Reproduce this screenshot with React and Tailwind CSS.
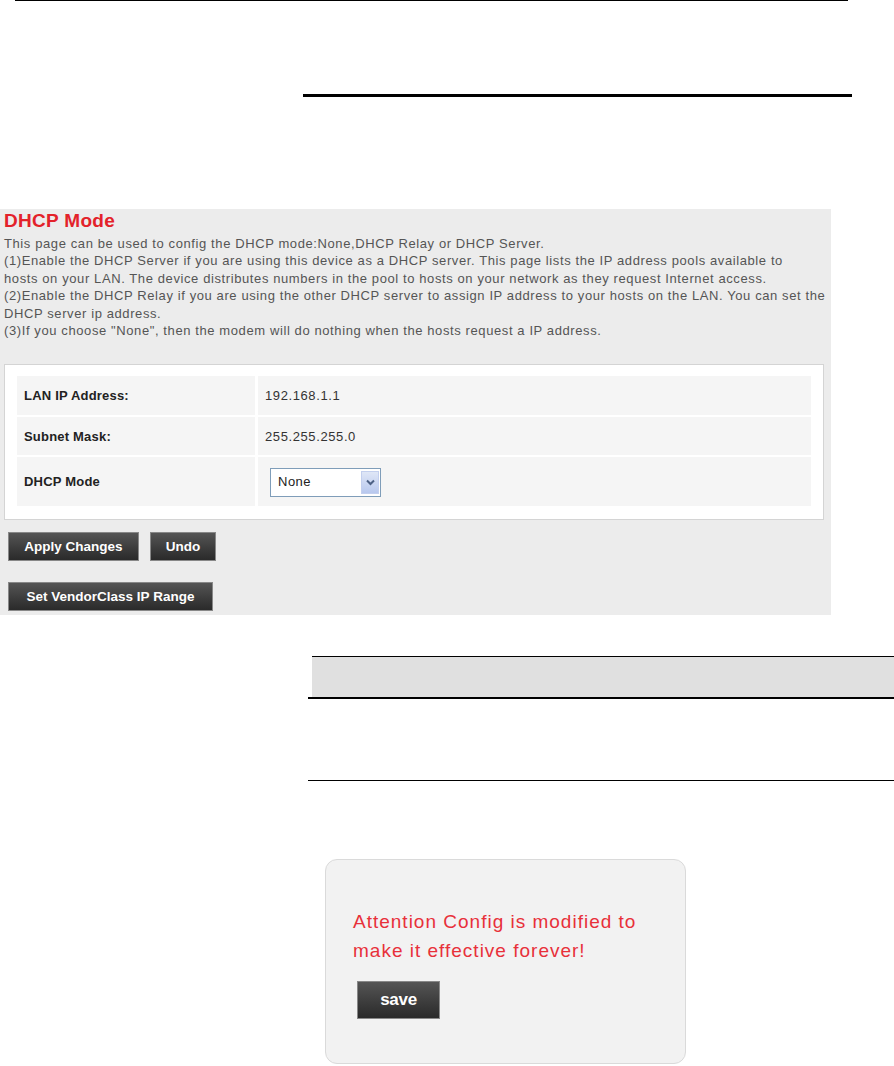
import React from 'react'

// Dark gradient button used by the router UI
function DarkButton({ children, className = '' }) {
  return (
    <button
      className={`h-[29px] border border-[#888] bg-gradient-to-b from-[#555] to-[#2a2a2a] text-white font-bold ${className}`}
    >
      {children}
    </button>
  )
}

const rows = [
  { label: 'LAN IP Address:', value: '192.168.1.1', h: 'h-[39px]' },
  { label: 'Subnet Mask:', value: '255.255.255.0', h: 'h-[38px]' },
]

export default function App() {
  return (
    <div className="relative w-[894px] h-[1066px] bg-white overflow-hidden font-['Liberation_Sans',Arial,sans-serif]">
      {/* top rule */}
      <div className="ml-[15px] w-[833px] h-px bg-black" />
      <div className="h-[93px]" />
      <div className="ml-[303px] w-[549px] h-[3px] bg-black" />
      <div className="h-[112px]" />

      {/* DHCP panel */}
      <div className="w-[831px] h-[406px] bg-[#ececec] pt-[1px]">
        <div className="pl-[4px] text-[#e3222a] font-bold text-[19px] tracking-[0.3px] leading-[22px]">DHCP Mode</div>
        <div className="pl-[4px] mt-[3px] text-[#555] text-[13px] tracking-[0.6px] leading-[17.4px] whitespace-nowrap">
          <div>This page can be used to config the DHCP mode:None,DHCP Relay or DHCP Server.</div>
          <div>(1)Enable the DHCP Server if you are using this device as a DHCP server. This page lists the IP address pools available to</div>
          <div>hosts on your LAN. The device distributes numbers in the pool to hosts on your network as they request Internet access.</div>
          <div>(2)Enable the DHCP Relay if you are using the other DHCP server to assign IP address to your hosts on the LAN. You can set the</div>
          <div>DHCP server ip address.</div>
          <div>(3)If you choose "None", then the modem will do nothing when the hosts request a IP address.</div>
        </div>

        <div className="ml-[4px] mt-[25px] w-[820px] h-[156px] bg-white border border-[#d4d4d4] px-[12px] pt-[11px]">
          <div className="flex flex-col gap-[2px]">
            {rows.map(r => (
              <div key={r.label} className={`flex gap-[3px] ${r.h}`}>
                <div className="w-[238px] bg-[#f5f5f5] flex items-center pl-[7px] font-bold text-[13px] tracking-[0.2px] text-[#222]">{r.label}</div>
                <div className="flex-1 bg-[#f5f5f5] flex items-center pl-[7px] text-[13px] tracking-[0.6px] text-[#333]">{r.value}</div>
              </div>
            ))}
            <div className="flex gap-[3px] h-[49px]">
              <div className="w-[238px] bg-[#f5f5f5] flex items-center pl-[7px] font-bold text-[13px] tracking-[0.2px] text-[#222]">DHCP Mode</div>
              <div className="flex-1 bg-[#f5f5f5] flex items-center pl-[12px] pt-[2px]">
                <div className="w-[111px] h-[29px] border border-[#7f9db9] bg-white flex items-center justify-between pl-[7px] pr-[1px]">
                  <span className="text-[13px] tracking-[0.5px] text-[#222] -mt-[3px]">None</span>
                  <span className="w-[18px] h-[23px] bg-gradient-to-b from-[#dfe6f6] to-[#b8c8ee] border border-[#c3cfee] flex items-center justify-center">
                    <svg width="9" height="7" viewBox="0 0 9 7">
                      <path d="M1 1.5 L4.5 5 L8 1.5" fill="none" stroke="#4d6185" strokeWidth="2" />
                    </svg>
                  </span>
                </div>
              </div>
            </div>
          </div>
        </div>

        <div className="flex gap-[11px] ml-[8px] mt-[12px]">
          <DarkButton className="w-[131px] text-[13.5px]">Apply Changes</DarkButton>
          <DarkButton className="w-[66px] text-[13.5px]">Undo</DarkButton>
        </div>
        <div className="ml-[8px] mt-[21px]">
          <DarkButton className="w-[205px] h-[28px] text-[13.5px]">Set VendorClass IP Range</DarkButton>
        </div>
      </div>

      {/* gray band section */}
      <div className="h-[41px]" />
      <div className="ml-[308px]">
        <div className="ml-[4px] border-t border-black bg-[#e0e0e0] h-[41px]" />
        <div className="h-[2px] bg-black" />
        <div className="h-[81px]" />
        <div className="h-px bg-black" />
      </div>

      {/* attention box */}
      <div className="ml-[325px] mt-[78px] w-[361px] h-[205px] rounded-[12px] bg-[#f2f2f2] border border-[#dadada] pl-[27px] pt-[47px]">
        <div className="text-[#e8303a] text-[19px] tracking-[1px] leading-[29px] whitespace-nowrap">
          Attention Config is modified to<br />make it effective forever!
        </div>
        <DarkButton className="ml-[4px] mt-[16px] w-[83px] h-[38px] text-[17px] tracking-[-0.3px]">save</DarkButton>
      </div>
    </div>
  )
}
